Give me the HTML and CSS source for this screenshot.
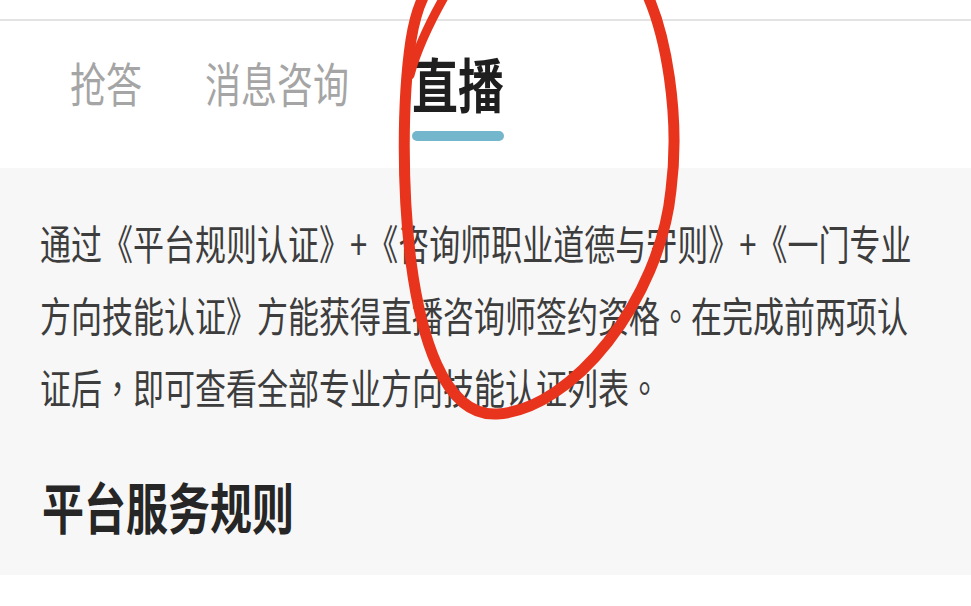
FILE: index.html
```html
<!DOCTYPE html>
<html lang="zh-CN">
<head>
<meta charset="utf-8">
<title>直播</title>
<link rel="stylesheet" href="styles.css">
</head>
<body>
<div class="screen">
  <div class="statusbar"></div>
  <nav class="tabs">
    <div class="tab"><span class="tab-label">抢答</span></div>
    <div class="tab"><span class="tab-label">消息咨询</span></div>
    <div class="tab active"><span class="tab-label">直播</span><span class="tab-indicator"></span></div>
  </nav>
  <main class="content">
    <p class="intro">
      <span class="line">通过《平台规则认证》+《咨询师职业道德与守则》+《一门专业</span>
      <span class="line">方向技能认证》方能获得直播咨询师签约资格<span class="punct" lang="zh-TW">。</span>在完成前两项认</span>
      <span class="line">证后<span class="punct" lang="zh-TW">，</span>即可查看全部专业方向技能认证列表<span class="punct" lang="zh-TW">。</span></span>
    </p>
    <h2 class="section-title">平台服务规则</h2>
  </main>
  <div class="footer"></div>
  <svg class="annotation" viewBox="0 0 971 606" width="971" height="606" aria-hidden="true">
    <path class="mark" d="M 640 -20 C 668 30, 680 120, 671 190 C 660 300, 572 410, 497 414 C 442 417, 420 330, 411 262 C 402 190, 402 100, 411 40 C 415 15, 421 0, 427 -10"/>
    <path class="mark thin" d="M 447 -8 C 432 18, 418 45, 410 75"/>
  </svg>
</div>
</body>
</html>
```

FILE: styles.css
```css
html, body {
  margin: 0;
  padding: 0;
  background: #ffffff;
}

body {
  font-family: "Noto Sans CJK SC", "Noto Sans", sans-serif;
}

.screen {
  position: relative;
  width: 971px;
  height: 606px;
  overflow: hidden;
  background: #ffffff;
}

.statusbar {
  height: 19px;
  background: #ffffff;
  border-bottom: 2px solid #e3e3e3;
}

.tabs {
  display: flex;
  gap: 63px;
  height: 147px;
  box-sizing: border-box;
  padding: 36px 0 0 70px;
  background: #ffffff;
}

.tab {
  display: flex;
  flex-direction: column;
  align-items: flex-start;
}

.tab-label {
  display: inline-block;
  font-size: 36px;
  line-height: 50px;
  color: #a5a5a5;
  transform: scaleY(1.28);
}

.tab.active .tab-label {
  font-size: 46px;
  font-weight: 700;
  color: #1f1f1f;
}

.tab-indicator {
  display: block;
  width: 92px;
  height: 10px;
  margin-top: 24px;
  border-radius: 5px;
  background: #74b6cb;
}

.content {
  height: 407px;
  box-sizing: border-box;
  padding: 39px 0 0 40px;
  background: #f7f7f7;
}

.intro {
  margin: 0;
  font-size: 31px;
  color: #3d3d3d;
  white-space: nowrap;
}

.intro .line {
  display: block;
  line-height: 72px;
  transform: scaleY(1.32);
}

.punct {
  font-family: "Noto Sans CJK TC", "Noto Sans CJK SC", sans-serif;
}

.section-title {
  margin: 53px 0 0 2px;
  font-size: 42px;
  line-height: 60px;
  font-weight: 700;
  color: #262626;
  transform: scaleY(1.3);
}

.footer {
  height: 31px;
  background: #ffffff;
}

.annotation {
  position: absolute;
  left: 0;
  top: 0;
  pointer-events: none;
}

.mark {
  fill: none;
  stroke: #e8341c;
  stroke-width: 11;
  stroke-linecap: round;
  stroke-linejoin: round;
}

.mark.thin {
  stroke-width: 9;
}
```
